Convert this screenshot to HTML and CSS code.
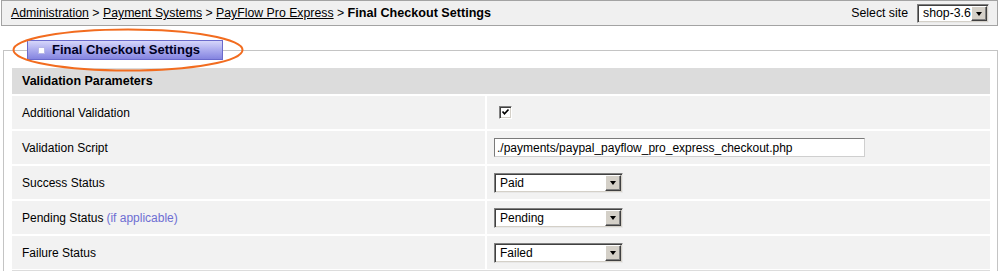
FILE: index.html
```html
<!DOCTYPE html>
<html>
<head>
<meta charset="utf-8">
<link rel="stylesheet" href="styles.css">
</head>
<body>
<div class="page">
  <div class="topbar">
    <div class="crumbs">
      <a href="#">Administration</a> &gt; <a href="#">Payment Systems</a> &gt; <a href="#">PayFlow Pro Express</a> &gt; <b>Final Checkout Settings</b>
    </div>
    <div class="site">
      <span>Select site</span>
      <span class="select select-site"><span class="select-value">shop-3.6</span><span class="select-btn"><i></i></span></span>
    </div>
  </div>

  <fieldset class="box">
    <legend class="legend"><span class="legend-icon"></span>Final Checkout Settings</legend>
    <div class="params">
      <div class="section-head">Validation Parameters</div>

      <div class="label">Additional Validation</div>
      <div class="value"><span class="checkbox"><svg width="9" height="9" viewBox="0 0 9 9"><path d="M1.5 3.5 L3.5 5.8 L7.5 1.5" fill="none" stroke="#000" stroke-width="1.7"/></svg></span></div>

      <div class="label">Validation Script</div>
      <div class="value"><input class="text" type="text" value="./payments/paypal_payflow_pro_express_checkout.php" readonly></div>

      <div class="label">Success Status</div>
      <div class="value"><span class="select select-status"><span class="select-value">Paid</span><span class="select-btn"><i></i></span></span></div>

      <div class="label">Pending Status <span class="hint">(if applicable)</span></div>
      <div class="value"><span class="select select-status"><span class="select-value">Pending</span><span class="select-btn"><i></i></span></span></div>

      <div class="label">Failure Status</div>
      <div class="value"><span class="select select-status"><span class="select-value">Failed</span><span class="select-btn"><i></i></span></span></div>

      <div class="section-foot"></div>
    </div>
  </fieldset>

  <svg class="highlight" width="236" height="46" viewBox="0 0 236 46"><ellipse cx="117" cy="22" rx="114.5" ry="20.5" fill="none" stroke="#f26c1f" stroke-width="2"/></svg>
</div>
</body>
</html>
```

FILE: styles.css
```css
html, body {
  margin: 0;
  padding: 0;
  background: #fff;
}

body {
  font-family: "Liberation Sans", Arial, sans-serif;
  font-size: 12px;
  color: #000;
}

.page {
  position: relative;
  width: 998px;
}

.topbar {
  margin: 0 0 0 1px;
  height: 24px;
  border: 1px solid #a3a3a3;
  background: #f0f0f0;
  display: flex;
  align-items: center;
  justify-content: space-between;
  padding: 0 8px 0 9px;
}

.crumbs {
  font-size: 12.3px;
}

.crumbs a {
  color: #000;
  text-decoration: underline;
}

.crumbs b {
  font-size: 12.6px;
}

.site {
  display: flex;
  align-items: center;
  gap: 9px;
  font-size: 12.3px;
}

.select {
  display: inline-flex;
  align-items: center;
  box-sizing: border-box;
  height: 20px;
  background: #fff;
  border: 1px solid;
  border-color: #808080 #e8e8e8 #e8e8e8 #808080;
  box-shadow: inset 1px 1px 0 #404040, inset -1px -1px 0 #d4d0c8;
  padding: 1px;
}

.select-site {
  width: 72px;
  height: 19px;
}

.select-status {
  width: 129px;
}

.select-value {
  flex: 1;
  padding-left: 4px;
  line-height: 16px;
  white-space: nowrap;
  overflow: hidden;
}

.select-btn {
  box-sizing: border-box;
  width: 16px;
  height: 100%;
  background: #d4d0c8;
  border: 1px solid;
  border-color: #fff #404040 #404040 #fff;
  box-shadow: inset -1px -1px 0 #808080;
  display: flex;
  align-items: center;
  justify-content: center;
}

.select-btn i {
  display: block;
  width: 0;
  height: 0;
  border-top: 4px solid #000;
  border-left: 3.5px solid transparent;
  border-right: 3.5px solid transparent;
  margin-top: 1px;
}

.box {
  margin: 14px 0 0 3px;
  padding: 8px 7px 0 8px;
  border: 1px solid #c4c4c4;
  border-bottom: none;
  min-width: 0;
}

.legend {
  margin-left: 15px;
  padding: 0 22px 0 10px;
  height: 18px;
  line-height: 18px;
  border: 1px solid #6a6acc;
  background: linear-gradient(#d6d6fa 0%, #b0b0f0 45%, #8484e0 100%);
  font-weight: bold;
  font-size: 13px;
  color: #000022;
  display: flex;
  align-items: center;
}

.legend-icon {
  display: inline-block;
  box-sizing: border-box;
  width: 7px;
  height: 7px;
  background: #fff;
  border: 1px solid #b8b8e8;
  margin-right: 7px;
  margin-top: 1px;
}

.params {
  display: grid;
  grid-template-columns: 473px 1fr;
  gap: 2px;
}

.section-head {
  grid-column: 1 / -1;
  height: 26px;
  background: #dcdcdc;
  font-weight: bold;
  font-size: 12.5px;
  display: flex;
  align-items: center;
  padding-left: 10px;
}

.section-foot {
  grid-column: 1 / -1;
  height: 26px;
  margin-top: -1px;
  background: #dcdcdc;
}

.label,
.value {
  height: 33px;
  background: #f2f2f2;
  display: flex;
  align-items: center;
}

.label {
  padding-left: 10px;
}

.value {
  padding-left: 7px;
}

.hint {
  color: #6e6ed2;
  margin-left: 3px;
}

.checkbox {
  box-sizing: border-box;
  width: 13px;
  height: 13px;
  margin-left: 5px;
  margin-top: -1px;
  background: #fff;
  border: 1px solid;
  border-color: #808080 #fff #fff #808080;
  box-shadow: inset 1px 1px 0 #404040, inset -1px -1px 0 #d4d0c8;
  display: flex;
  align-items: center;
  justify-content: center;
}

.text {
  box-sizing: border-box;
  width: 371px;
  height: 19px;
  margin: 0;
  padding: 0 2px;
  border: 1px solid;
  border-color: #7a7a7a #cfcfcf #cfcfcf #7a7a7a;
  background: #fff;
  font-family: "Liberation Sans", Arial, sans-serif;
  font-size: 12px;
  color: #000;
  outline: none;
}

.highlight {
  position: absolute;
  left: 11px;
  top: 28px;
}
```
